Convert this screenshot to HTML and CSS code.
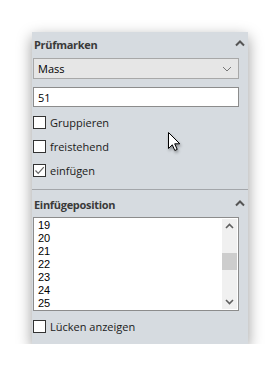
FILE: index.html
```html
<!DOCTYPE html>
<html lang="de">
<head>
  <meta charset="UTF-8">
  <title>Prüfmarken</title>
  <link rel="stylesheet" href="styles.css">
</head>
<body>
  <div class="panel">
    <div class="sec-head">
      <span>Prüfmarken</span>
      <svg class="chev" width="10" height="7" viewBox="0 0 10 7"><path d="M1 5.5 L5 1.5 L9 5.5" fill="none" stroke="#555" stroke-width="2"/></svg>
    </div>
    <div class="select">
      <span>Mass</span>
      <svg width="10" height="6" viewBox="0 0 10 6"><path d="M1 1 L5 5 L9 1" fill="none" stroke="#777" stroke-width="1"/></svg>
    </div>
    <div class="field">51</div>
    <div class="check"><span class="box"></span>Gruppieren</div>
    <div class="check"><span class="box"></span>freistehend</div>
    <div class="check"><span class="box"><svg width="11" height="11" viewBox="0 0 11 11"><path d="M1.5 5.5 L4.2 8.3 L9.8 2.2" fill="none" stroke="#666" stroke-width="1.2"/></svg></span>einfügen</div>

    <div class="sep"></div>

    <div class="sec-head second">
      <span>Einfügeposition</span>
      <svg class="chev" width="10" height="7" viewBox="0 0 10 7"><path d="M1 5.5 L5 1.5 L9 5.5" fill="none" stroke="#555" stroke-width="2"/></svg>
    </div>
    <div class="listbox">
      <ul class="items">
        <li>19</li>
        <li>20</li>
        <li>21</li>
        <li>22</li>
        <li>23</li>
        <li>24</li>
        <li>25</li>
      </ul>
      <div class="scroll">
        <svg width="15" height="15" viewBox="0 0 15 15"><path d="M4 9 L7.5 5.5 L11 9" fill="none" stroke="#606060" stroke-width="1.6"/></svg>
        <div class="track"><div class="thumb"></div></div>
        <svg width="15" height="15" viewBox="0 0 15 15"><path d="M4 6 L7.5 9.5 L11 6" fill="none" stroke="#606060" stroke-width="1.6"/></svg>
      </div>
    </div>
    <div class="check last"><span class="box"></span>Lücken anzeigen</div>

    <svg class="cursor" width="14" height="21" viewBox="0 0 14 21"><path d="M0.5 0.5 L0.5 16.5 L4.3 12.8 L6.8 18.5 L9.2 17.4 L6.7 11.8 L11.8 11.8 Z" fill="#fff" stroke="#000" stroke-width="1"/></svg>
  </div>
</body>
</html>
```

FILE: styles.css
```css
body { margin: 0; background: #fff; font-family: "Open Sans", "Noto Sans", sans-serif; font-size: 11px; color: #111; }
.panel { position: relative; box-sizing: border-box; margin: 32px 0 0 32px; width: 216px; height: 312px; background: #d6dbe0; padding: 0 9px 0 1px; box-shadow: 0 5px 14px rgba(0,0,0,0.4); }
.sec-head { height: 24px; display: flex; align-items: center; justify-content: space-between; padding-left: 1px; margin-right: -6px; font-weight: bold; font-size: 11px; letter-spacing: -0.3px; color: #3a3a3a; }
.sec-head.second { margin-top: 2px; }
.chev { margin-top: -1px; }
.select { margin-top: 2px; height: 21px; box-sizing: border-box; border: 1px solid #a8a8a8; background: #e6e6e6; display: flex; align-items: center; justify-content: space-between; padding: 0 6px 0 4px; color: #000; }
.field { margin-top: 8px; height: 20px; box-sizing: border-box; border: 1px solid #8c8c8c; background: #fff; display: flex; align-items: center; padding-left: 4px; color: #000; }
.check { height: 24px; display: flex; align-items: center; gap: 4px; color: #1a1a1a; }
.field + .check { margin-top: 3px; }
.check.last { margin-top: 3px; }
.box { width: 13px; height: 13px; box-sizing: border-box; border: 1px solid #333; background: #fff; display: flex; align-items: center; justify-content: center; }
.sep { height: 1px; background: #a3a6aa; margin: 7px -9px 0 -1px; }
.listbox { margin-top: 1px; height: 94px; box-sizing: border-box; border: 1px solid #8c8c8c; background: #fff; display: flex; padding: 1px; }
.items { list-style: none; margin: 0; padding: 0 0 0 3px; flex: 1; font-family: "Liberation Sans", Arial, sans-serif; font-size: 11px; }
.items li { height: 13px; line-height: 13px; color: #000; }
.scroll { width: 15px; background: #f0f0f0; display: flex; flex-direction: column; }
.track { flex: 1; position: relative; }
.thumb { margin: 19px 0 0 0; height: 17px; background: #cdcdcd; }
.cursor { position: absolute; left: 136px; top: 100px; filter: drop-shadow(1px 2px 1.5px rgba(0,0,0,0.35)); }
```
